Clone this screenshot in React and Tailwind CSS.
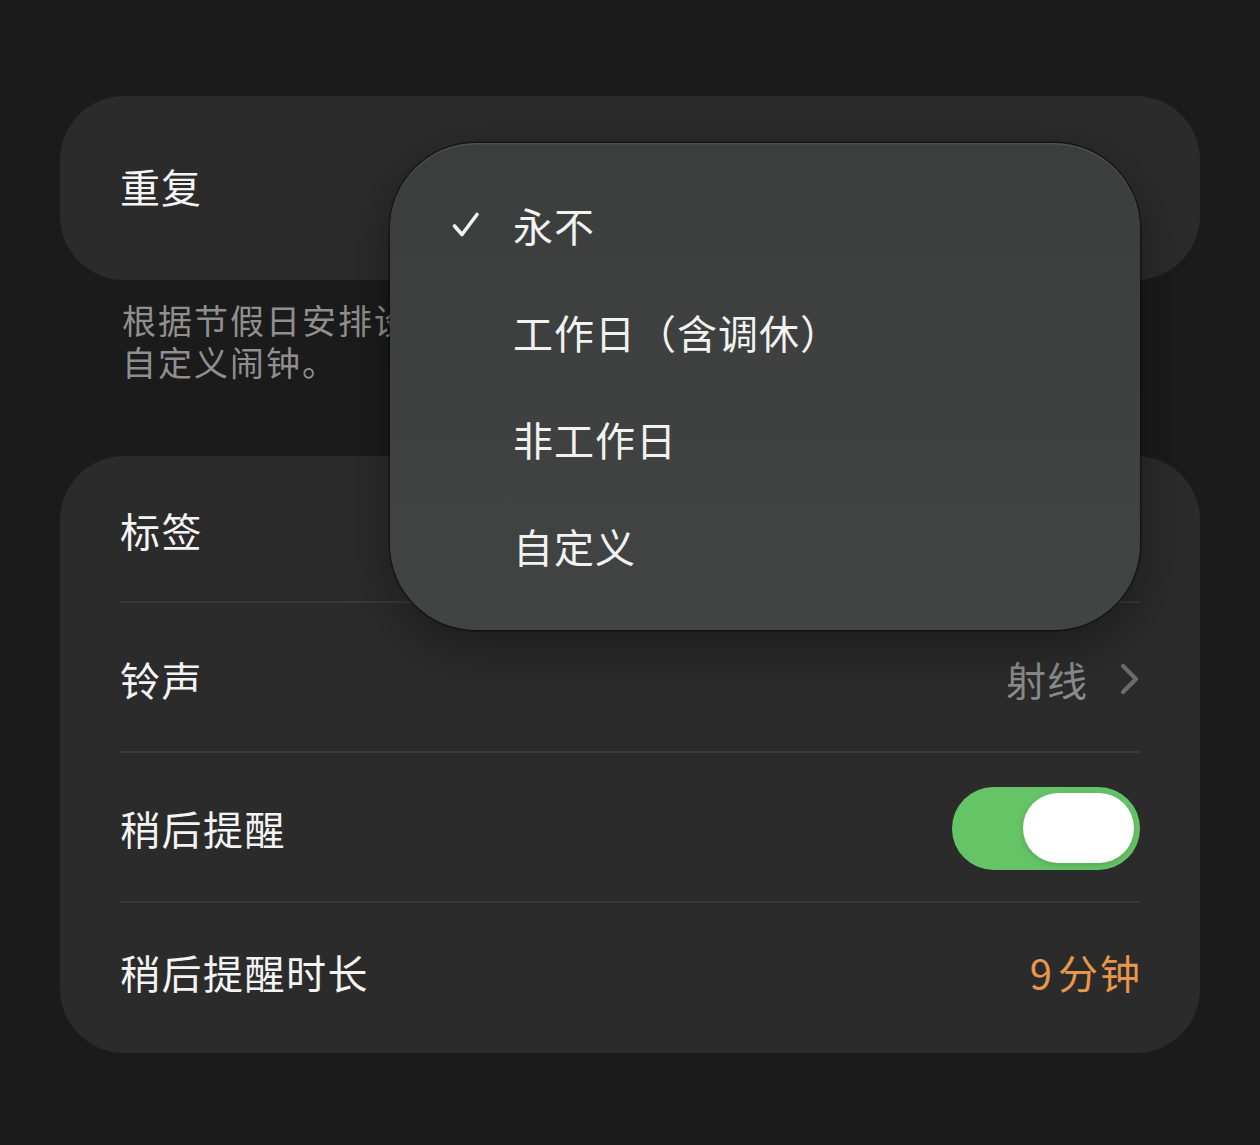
import React from "react";

const font = { fontFamily: '"Noto Sans CJK SC", "Noto Sans", sans-serif' };

function Divider() {
  return <div className="h-[2px] bg-[#393939]" />;
}

export default function App() {
  return (
    <div
      className="relative w-[1260px] h-[1145px] bg-[#1b1b1b] px-[60px] pt-[96px] overflow-hidden"
      style={font}
    >
      {/* Top card */}
      <div className="h-[184px] rounded-[64px] bg-[#2b2b2b] px-[60px] flex items-center">
        <span className="text-[40px] leading-none tracking-[1px] text-[#f4f4f4] -mt-[4px]">重复</span>
      </div>

      {/* Description */}
      <div className="mt-[19px] px-[62px] text-[34px] leading-[42px] tracking-[2px] text-[#8f8f8f]">
        <div className="whitespace-nowrap">根据节假日安排设置的闹钟将自动调整，如需</div>
        <div className="whitespace-nowrap">自定义闹钟。</div>
      </div>

      {/* Second card */}
      <div className="mt-[73px] rounded-[64px] bg-[#2b2b2b] px-[60px]">
        <div className="h-[145px] flex items-center">
          <span className="text-[40px] leading-none tracking-[1.5px] text-[#f4f4f4] mt-[2px]">标签</span>
        </div>
        <Divider />
        <div className="h-[148px] flex items-center justify-between">
          <span className="text-[40px] leading-none tracking-[1.5px] text-[#f4f4f4] mt-[4px]">铃声</span>
          <div className="flex items-center gap-[32px] mt-[4px]">
            <span className="text-[40px] leading-none tracking-[1px] text-[#8b8b8b]">射线</span>
            <svg width="20" height="32" viewBox="0 0 20 32" fill="none">
              <path d="M3 3 L16 16 L3 29" stroke="#6c6c6c" strokeWidth="4.2" strokeLinecap="round" strokeLinejoin="round" />
            </svg>
          </div>
        </div>
        <Divider />
        <div className="h-[148px] flex items-center justify-between">
          <span className="text-[40px] leading-none tracking-[1.5px] text-[#f4f4f4] mt-[2px]">稍后提醒</span>
          <div className="w-[188px] h-[83px] rounded-full bg-[#65c466] flex items-center justify-end pr-[6px] mt-[2px]">
            <div className="w-[111px] h-[70px] rounded-full bg-white shadow-[0_2px_6px_rgba(0,0,0,0.15)]" />
          </div>
        </div>
        <Divider />
        <div className="h-[150px] flex items-center justify-between">
          <span className="text-[40px] leading-none tracking-[1.5px] text-[#f4f4f4] -mt-[12px]">稍后提醒时长</span>
          <span className="text-[40px] leading-none tracking-[2px] text-[#e8964a] -mt-[12px] -mr-[2px] flex items-baseline">
            <span className="mr-[4px]">9</span>分钟
          </span>
        </div>
      </div>

      {/* Dropdown menu */}
      <div className="absolute left-[390px] top-[143px] w-[750px] h-[487px] rounded-[86px] bg-gradient-to-b from-[#3c3d3d] to-[#424343] shadow-[0_0_0_1.5px_rgba(10,10,10,0.55),inset_0_1.5px_0_rgba(255,255,255,0.09),0_16px_50px_rgba(0,0,0,0.35)] pt-[28px]">
        {[
          { t: "永不", c: true },
          { t: "工作日（含调休）" },
          { t: "非工作日" },
          { t: "自定义" },
        ].map((it, i) => (
          <div key={i} className="h-[107px] flex items-center">
            <div className="w-[123px] flex justify-start pl-[62px]">
              {it.c && (
                <svg width="28" height="26" viewBox="0 0 28 26" fill="none">
                  <path d="M2.5 14 L10 22.5 L25 2.5" stroke="#f4f4f4" strokeWidth="3.6" strokeLinecap="round" strokeLinejoin="round" />
                </svg>
              )}
            </div>
            <span className="text-[40px] leading-none tracking-[1px] text-[#f2f2f2]">{it.t}</span>
          </div>
        ))}
      </div>
    </div>
  );
}
